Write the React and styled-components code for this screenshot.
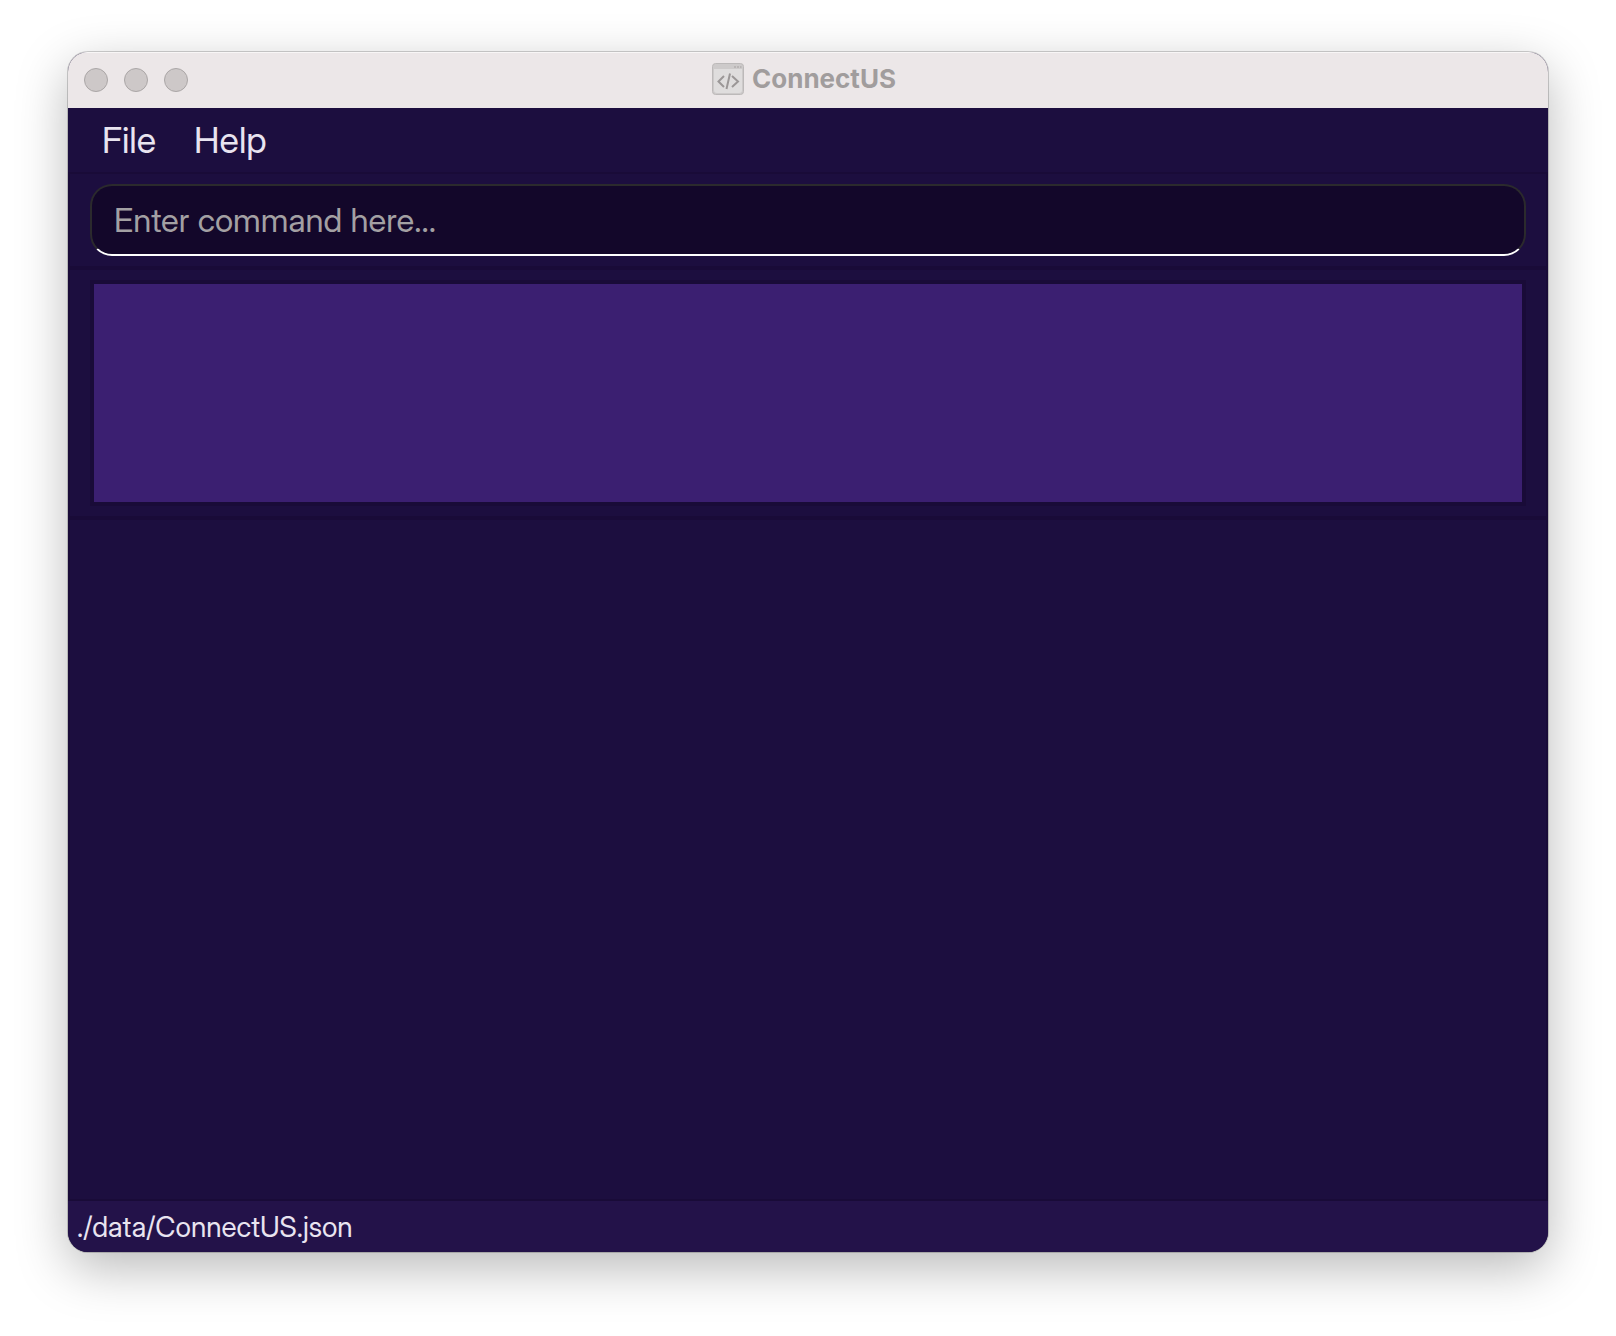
import React from "react";
import styled, { createGlobalStyle } from "styled-components";

const fontStack = `"Inter Display", Inter, "Liberation Sans", sans-serif`;

const colors = {
  base: "#1c0e3f",
  line: "#190b38",
  field: "#13072a",
  panel: "#3b1f71",
  status: "#231249",
  title: "#ece7e8",
  text: "#e9e4f0",
};

const GlobalStyle = createGlobalStyle`
  *, *::before, *::after { box-sizing: border-box; }
  body {
    margin: 0;
    background: #fff;
    font-family: ${fontStack};
  }
`;

const Desktop = styled.div`
  display: flex;
  min-height: 100vh;
  padding: 52px 68px 84px;
`;

const Window = styled.div`
  flex: 1;
  min-width: 0;
  display: flex;
  flex-direction: column;
  overflow: hidden;
  border-radius: 20px;
  background: ${colors.base};
  color: ${colors.text};
  box-shadow:
    0 0 0 1px rgba(0, 0, 0, 0.18),
    0 16px 52px rgba(0, 0, 0, 0.28);
`;

const TitleBar = styled.header`
  display: grid;
  grid-template-columns: 1fr auto 1fr;
  align-items: center;
  height: 56px;
  padding: 0 16px;
  background: ${colors.title};
  box-shadow: inset 0 1px 0 #f8f6f6;
`;

const WindowControls = styled.div`
  display: flex;
  gap: 16px;
`;

const WindowControl = styled.button`
  width: 24px;
  height: 24px;
  padding: 0;
  border: 1px solid #aaa6a6;
  border-radius: 50%;
  background: #cdc8c8;
`;

const Title = styled.h1`
  display: flex;
  align-items: center;
  gap: 8px;
  margin: 0;
  padding: 0 8px 2px 0;
  font: 700 26px/32px Inter, "Liberation Sans", sans-serif;
  color: #a19d9d;
`;

const MenuBar = styled.nav`
  display: flex;
  gap: 38px;
  height: 66px;
  padding: 0 34px;
  border-bottom: 2px solid ${colors.line};
`;

const MenuButton = styled.button`
  padding: 0;
  border: 0;
  background: none;
  color: inherit;
  font: 400 36px/64px ${fontStack};
`;

const Pane = styled.section`
  padding: 10px 20px;
  border: 0 solid ${colors.line};
  border-width: 0 2px 4px;
`;

const CommandInput = styled.input`
  display: block;
  width: 100%;
  height: 72px;
  padding: 0 22px;
  border: 2px solid #2b2a2d;
  border-bottom-color: #fff;
  border-radius: 22px;
  outline: none;
  background: ${colors.field};
  color: #fff;
  font: 400 33px/40px ${fontStack};

  &::placeholder {
    color: #a3a0a3;
    opacity: 1;
  }
`;

const ResultDisplay = styled.output`
  display: block;
  height: 226px;
  border: 4px solid ${colors.line};
  background: ${colors.panel};
`;

const ContactList = styled.main`
  flex: 1;
  border: 0 solid ${colors.line};
  border-width: 0 2px 2px;
`;

const StatusBar = styled.footer`
  height: 51px;
  padding: 0 9px;
  background: ${colors.status};
  font-size: 28px;
  line-height: 52px;
  font-weight: 400;
`;

function CodeIcon() {
  return (
    <svg width="32" height="32" viewBox="0 0 32 32" fill="none" aria-hidden="true">
      <rect x="0.5" y="0.5" width="31" height="31" rx="3" fill="#cdcaca" stroke="#bcb9b9" />
      <path d="M2 6h28v21a3 3 0 0 1-3 3H5a3 3 0 0 1-3-3z" fill="#dfdddd" />
      <path d="M22 4h2M25 4h2M28 4h1.5" stroke="#b2afaf" strokeWidth="1.5" />
      <path d="M12 13L6.500 18.500L12 24M20 13L26 18.500L20 24M18 10.500L14.500 26" stroke="#9b9797" strokeWidth="2" />
    </svg>
  );
}

export default function App() {
  return (
    <>
      <GlobalStyle />
      <Desktop>
        <Window>
          <TitleBar>
            <WindowControls>
              {["Close", "Minimize", "Zoom"].map((name) => (
                <WindowControl key={name} type="button" aria-label={name} />
              ))}
            </WindowControls>
            <Title>
              <CodeIcon />
              ConnectUS
            </Title>
          </TitleBar>
          <MenuBar>
            <MenuButton type="button">File</MenuButton>
            <MenuButton type="button">Help</MenuButton>
          </MenuBar>
          <Pane>
            <CommandInput type="text" aria-label="Command" placeholder="Enter command here..." />
          </Pane>
          <Pane>
            <ResultDisplay />
          </Pane>
          <ContactList />
          <StatusBar>./data/ConnectUS.json</StatusBar>
        </Window>
      </Desktop>
    </>
  );
}
